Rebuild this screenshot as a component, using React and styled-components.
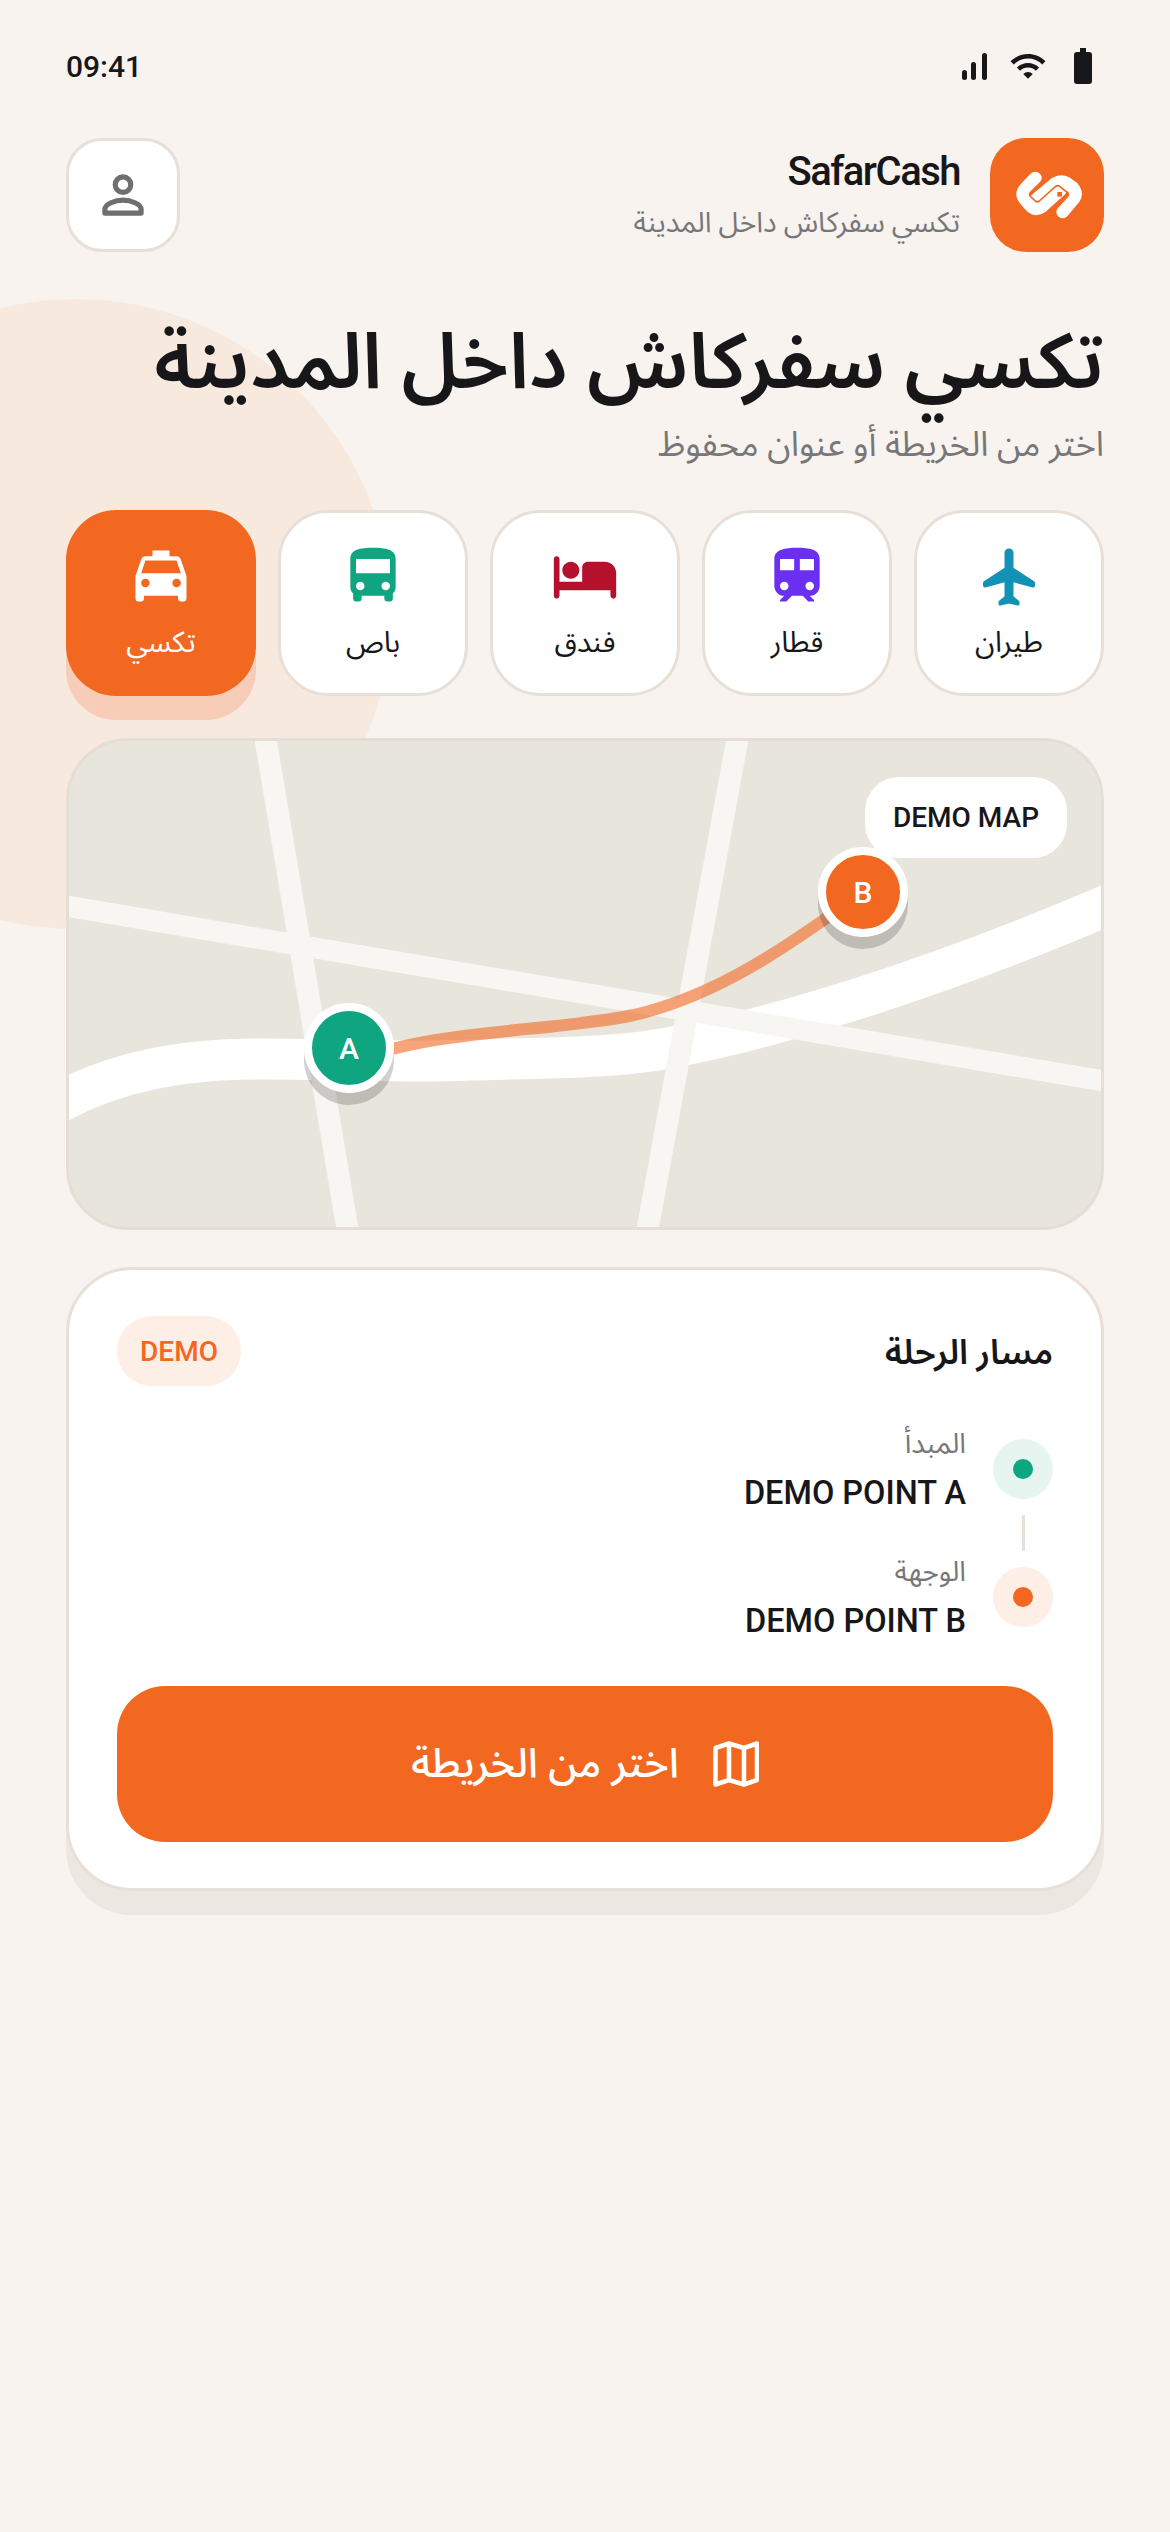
import React from "react";
import styled, { createGlobalStyle } from "styled-components";
import { MdTrain, MdDirectionsBus, MdLocalTaxi, MdWifi } from "react-icons/md";

const GlobalStyle = createGlobalStyle`
  html, body {
    margin: 0;
    padding: 0;
    background: #f8f3ee;
  }
  * { box-sizing: border-box; }
`;

const PlaneIcon = ({ color }) => (
  <svg width="68" height="68" viewBox="0 0 68 68" fill={color} stroke={color} strokeLinejoin="round">
    <path d="M34 11 V56" strokeWidth="9" strokeLinecap="round" fill="none" />
    <path d="M30 28 L10 41 V43.500 L30 38 H38 L58 43.500 V41 L38 28 Z" strokeWidth="4" />
    <path d="M30 56 L25 60 V62 L34 60 L43 62 V60 L38 56 Z" strokeWidth="3" />
  </svg>
);

const BedIcon = ({ color }) => (
  <svg width="68" height="68" viewBox="0 0 24 24" fill={color}>
    <path d="M7 13c1.66 0 3-1.34 3-3S8.660 7 7 7s-3 1.340-3 3 1.340 3 3 3zm12-6h-6c-1.100 0-2 .9-2 2v5H3V6c0-.55-.45-1-1-1s-1 .45-1 1v13c0 .55.45 1 1 1s1-.45 1-1v-2h18v2c0 .55.45 1 1 1s1-.45 1-1v-8c0-2.210-1.790-4-4-4z" />
  </svg>
);

const chips = [
  { label: "طيران", Icon: PlaneIcon, color: "#1292b4" },
  { label: "قطار", Icon: MdTrain, color: "#6a2ff0" },
  { label: "فندق", Icon: BedIcon, color: "#b5102c" },
  { label: "باص", Icon: MdDirectionsBus, color: "#10a581" },
  { label: "تكسي", Icon: MdLocalTaxi, color: "#ffffff", active: true },
];

export default function App() {
  return (
    <Page dir="rtl">
      <GlobalStyle />
      <Blob />
      <StatusBar>
        <StatusIcons>
          <svg width="18" height="36" viewBox="0 0 18 36" fill="#17171a">
            <path d="M6 0 H12 V4 H15 Q18 4 18 7 V33 Q18 36 15 36 H3 Q0 36 0 33 V7 Q0 4 3 4 H6 Z" />
          </svg>
          <MdWifi size={38} color="#17171a" />
          <svg width="25" height="27" viewBox="0 0 25 27" fill="#17171a">
            <rect x="0" y="17" width="5" height="10" rx="2.500" />
            <rect x="9" y="9" width="5" height="18" rx="2.500" />
            <rect x="20" y="0" width="5" height="27" rx="2.500" />
          </svg>
        </StatusIcons>
        <Time dir="ltr">09:41</Time>
      </StatusBar>

      <Header>
        <Brand>
          <LogoBox>
            <svg width="110" height="90" viewBox="0 0 330 270" fill="none" strokeLinecap="round" strokeLinejoin="round">
              <path d="M130 84 L100 115 Q85 132 100 150 L118 170 Q132 182 150 170 L205 120" stroke="#fff" strokeWidth="38" />
              <path d="M212 186 L242 150 Q258 132 242 112 L225 100 Q210 90 190 100 L130 150" stroke="#fff" strokeWidth="38" />
              <path
                d="M152 92 L115 128 Q110 134 116 140 L130 153 Q136 158 142 153 L190 110 Q197 104 204 110 L226 128 Q232 134 226 140 L196 172"
                stroke="#f36821"
                strokeWidth="5"
              />
              <rect x="196" y="126" width="14" height="14" fill="#f36821" />
            </svg>
          </LogoBox>
          <BrandText>
            <BrandName dir="ltr">SafarCash</BrandName>
            <BrandSub>تكسي سفركاش داخل المدينة</BrandSub>
          </BrandText>
        </Brand>
        <ProfileButton>
          <svg width="62" height="62" viewBox="0 0 24 24" fill="none" stroke="#6f6f6f" strokeWidth="2">
            <circle cx="12" cy="8" r="3" />
            <path d="M5 19 V17.500 C5 15.500 9 14 12 14 S19 15.500 19 17.500 V19 Z" strokeLinejoin="round" />
          </svg>
        </ProfileButton>
      </Header>

      <Hero>
        <HeroTitle>تكسي سفركاش داخل المدينة</HeroTitle>
        <HeroSub>اختر من الخريطة أو عنوان محفوظ</HeroSub>
      </Hero>

      <ChipRow>
        {chips.map(({ label, Icon, color, active }) => (
          <Chip key={label} $active={active}>
            <Icon size={68} color={color} />
            <ChipLabel $active={active}>{label}</ChipLabel>
          </Chip>
        ))}
      </ChipRow>

      <MapCard>
        <svg width="1038" height="492" viewBox="0 0 1038 492" fill="none">
          <path
            d="M-20 372 C45 332 120 321 195 321 C290 321 340 325 404 322 C480 320 550 320 602 310 C700 292 860 246 1058 160"
            stroke="#ffffff"
            strokeWidth="41"
          />
          <path d="M199 -2 L282 494" stroke="#f8f6f2" strokeWidth="22" />
          <path d="M672 -2 L581 494" stroke="#f8f6f2" strokeWidth="22" />
          <path d="M0 168 L1038 343" stroke="#f8f6f2" strokeWidth="21" />
          <path
            d="M283 325 C370 290 480 295 568 277 C650 258 720 210 797 154"
            stroke="#f36821"
            strokeOpacity="0.6"
            strokeWidth="12"
          />
        </svg>
        <MapLabel>DEMO MAP</MapLabel>
        <Pin $x={283} $y={310} $color="#10a581">A</Pin>
        <Pin $x={797} $y={154} $color="#f36821">B</Pin>
      </MapCard>

      <RouteCard>
        <RouteHead>
          <RouteTitle>مسار الرحلة</RouteTitle>
          <DemoPill>DEMO</DemoPill>
        </RouteHead>
        <Stops>
          <Stop>
            <StopDot $bg="#e6f5f0" $color="#10a581" />
            <StopText>
              <StopLabel>المبدأ</StopLabel>
              <StopValue>DEMO POINT A</StopValue>
            </StopText>
          </Stop>
          <Connector />
          <Stop>
            <StopDot $bg="#fdeee6" $color="#f36821" />
            <StopText>
              <StopLabel>الوجهة</StopLabel>
              <StopValue>DEMO POINT B</StopValue>
            </StopText>
          </Stop>
        </Stops>
        <MapButton>
          <svg width="46" height="46" viewBox="0 0 46 46" fill="none" stroke="#fff" strokeWidth="4.500" strokeLinejoin="round">
            <path d="M2.500 7 L16 2.500 L31 7 L44 2.500 V39 L31 43.500 L16 39 L2.500 43.500 Z M16 2.500 V39 M31 7 V43.500" />
          </svg>
          اختر من الخريطة
        </MapButton>
      </RouteCard>
    </Page>
  );
}

const Page = styled.div`
  position: relative;
  width: 1170px;
  height: 2532px;
  overflow: hidden;
  padding: 0 66px;
  background: #f8f3ee;
  font-family: "Roboto", "Noto Sans Arabic", "Noto Sans", sans-serif;
  color: #17171a;
`;

const Blob = styled.div`
  position: absolute;
  left: -239px;
  top: 299px;
  width: 630px;
  height: 630px;
  border-radius: 50%;
  background: #f8e9df;
`;

const StatusBar = styled.div`
  position: relative;
  height: 138px;
  display: flex;
  justify-content: space-between;
  align-items: flex-start;
  padding: 47px 12px 0 0;
`;

const Time = styled.div`
  font-size: 30px;
  font-weight: 500;
  line-height: 40px;
`;

const StatusIcons = styled.div`
  display: flex;
  align-items: center;
  gap: 27px;

  svg:last-child {
    margin-right: -5px;
  }
`;

const Header = styled.div`
  position: relative;
  display: flex;
  justify-content: space-between;
  align-items: center;
  height: 114px;
`;

const Brand = styled.div`
  display: flex;
  align-items: center;
  gap: 30px;
`;

const LogoBox = styled.div`
  width: 114px;
  height: 114px;
  border-radius: 36px;
  background: #f36821;
  display: flex;
  align-items: center;
  justify-content: center;
`;

const BrandText = styled.div`
  display: flex;
  flex-direction: column;
  gap: 6px;
`;

const BrandName = styled.div`
  font-size: 40px;
  font-weight: 500;
  letter-spacing: -1.500px;
  line-height: 50px;
  text-align: right;
`;

const BrandSub = styled.div`
  font-size: 28.500px;
  line-height: 40px;
  color: #77777a;
`;

const ProfileButton = styled.div`
  width: 114px;
  height: 114px;
  border-radius: 36px;
  background: #fff;
  border: 3px solid #e8e0d8;
  display: flex;
  align-items: center;
  justify-content: center;
`;

const Hero = styled.div`
  position: relative;
  margin-top: 58px;
`;

const HeroTitle = styled.h1`
  margin: 0;
  font-size: 77.500px;
  font-weight: 600;
  line-height: 104px;
  white-space: nowrap;
`;

const HeroSub = styled.div`
  margin-top: 5px;
  font-size: 34.500px;
  line-height: 50px;
  color: #77777a;
`;

const ChipRow = styled.div`
  position: relative;
  margin-top: 41px;
  display: grid;
  grid-template-columns: repeat(5, 190px);
  gap: 22px;
`;

const Chip = styled.div`
  height: 186px;
  border-radius: 50px;
  display: flex;
  flex-direction: column;
  align-items: center;
  padding-top: ${(p) => (p.$active ? "32px" : "29px")};
  gap: 12px;
  background: ${(p) => (p.$active ? "#f36821" : "#fff")};
  border: ${(p) => (p.$active ? "none" : "3px solid #e8e0d8")};
  box-shadow: ${(p) => (p.$active ? "0 24px 0 #f8cdb8" : "none")};
`;

const ChipLabel = styled.div`
  font-size: 29px;
  line-height: 40px;
  color: ${(p) => (p.$active ? "#fff" : "#17171a")};
`;

const MapCard = styled.div`
  position: relative;
  margin-top: 42px;
  height: 492px;
  border-radius: 62px;
  overflow: hidden;
  background: #e8e5dd;
  border: 3px solid #e5ded6;

  svg {
    display: block;
    margin: -3px;
  }
`;

const MapLabel = styled.div`
  position: absolute;
  left: 796px;
  top: 36px;
  width: 202px;
  height: 81px;
  border-radius: 34px;
  background: #fff;
  display: flex;
  align-items: center;
  justify-content: center;
  font-size: 28px;
  font-weight: 500;
`;

const Pin = styled.div`
  position: absolute;
  left: ${(p) => p.$x - 48}px;
  top: ${(p) => p.$y - 48}px;
  width: 90px;
  height: 90px;
  border-radius: 50%;
  background: ${(p) => p.$color};
  border: 8px solid #fff;
  box-shadow: 0 12px 0 rgba(23, 23, 26, 0.2);
  color: #fff;
  font-size: 30px;
  font-weight: 500;
  display: flex;
  align-items: center;
  justify-content: center;
`;

const RouteCard = styled.div`
  position: relative;
  margin-top: 37px;
  height: 624px;
  border-radius: 66px;
  background: #fff;
  border: 3px solid #e8e0d8;
  box-shadow: 0 24px 0 #ece7e0;
  padding: 46px 48px;
`;

const RouteHead = styled.div`
  display: flex;
  justify-content: space-between;
  align-items: center;
  height: 70px;
`;

const RouteTitle = styled.div`
  font-size: 34.500px;
  font-weight: 600;
  padding-top: 3px;
`;

const DemoPill = styled.div`
  width: 124px;
  height: 70px;
  border-radius: 35px;
  background: #fdeee6;
  color: #f36821;
  font-size: 28px;
  font-weight: 500;
  display: flex;
  align-items: center;
  justify-content: center;
`;

const Stops = styled.div`
  margin-top: 37px;
  display: flex;
  flex-direction: column;
`;

const Stop = styled.div`
  display: flex;
  align-items: center;
  gap: 27px;
  height: 92px;
`;

const StopDot = styled.div`
  width: 60px;
  height: 60px;
  flex: none;
  border-radius: 50%;
  background: ${(p) => p.$bg};
  display: flex;
  align-items: center;
  justify-content: center;

  &::after {
    content: "";
    width: 20px;
    height: 20px;
    border-radius: 50%;
    background: ${(p) => p.$color};
  }
`;

const StopText = styled.div`
  display: flex;
  flex-direction: column;
  padding-top: 3px;
`;

const StopLabel = styled.div`
  font-size: 28px;
  line-height: 42px;
  color: #77777a;
`;

const StopValue = styled.div`
  margin-top: 3px;
  font-size: 32.500px;
  font-weight: 500;
  line-height: 50px;
`;

const Connector = styled.div`
  width: 3px;
  height: 36px;
  margin-right: 28px;
  background: #e5e0da;
`;

const MapButton = styled.div`
  margin-top: 43px;
  height: 156px;
  border-radius: 48px;
  background: #f36821;
  color: #fff;
  font-size: 41px;
  font-weight: 500;
  display: flex;
  align-items: center;
  justify-content: center;
  gap: 34px;
`;
